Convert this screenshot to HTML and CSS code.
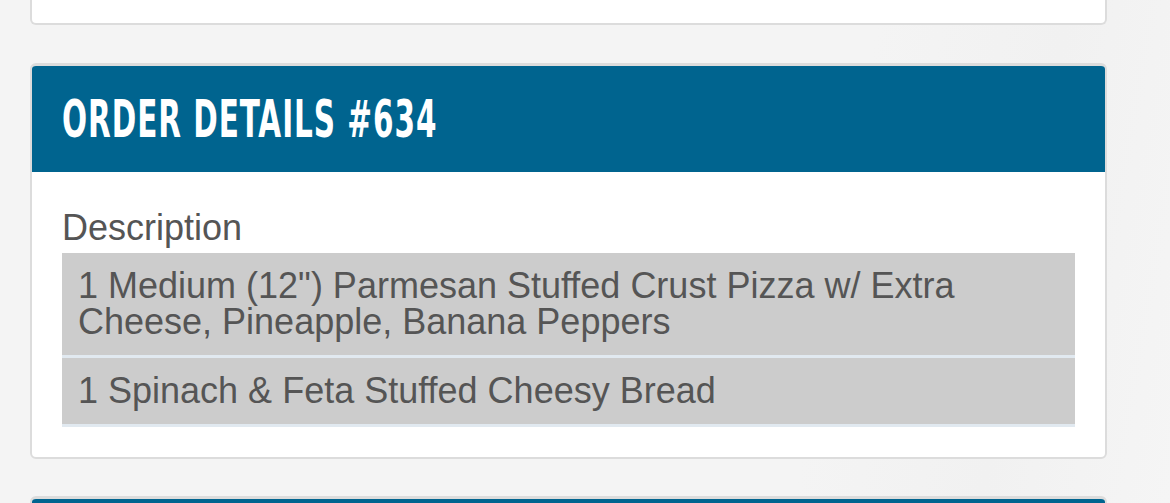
FILE: index.html
```html
<!DOCTYPE html>
<html>
<head>
<meta charset="utf-8">
<link rel="stylesheet" href="styles.css">
</head>
<body>
<div class="page">
  <div class="card card-prev"></div>
  <div class="card">
    <div class="card-header"><h2 class="title">ORDER DETAILS #634</h2></div>
    <div class="card-body">
      <div class="label">Description</div>
      <div class="items">
        <div class="item">1 Medium (12") Parmesan Stuffed Crust Pizza w/ Extra Cheese, Pineapple, Banana Peppers</div>
        <div class="item">1 Spinach &amp; Feta Stuffed Cheesy Bread</div>
      </div>
    </div>
  </div>
  <div class="card card-next">
    <div class="card-header card-header-stub"></div>
  </div>
</div>
</body>
</html>
```
FILE: styles.css
```css
html, body {
  margin: 0;
  padding: 0;
}
body {
  background: linear-gradient(100deg, #f4f4f4 0%, #f4f4f4 70%, #f1f1f1 85%, #f5f5f5 100%);
  font-family: "Liberation Sans", Arial, sans-serif;
  height: 503px;
  overflow: hidden;
}
.page {
  display: flex;
  flex-direction: column;
  gap: 37px;
  padding: 0 63px 0 30px;
}
.card {
  background: #fff;
  border: 2px solid #dcdcdc;
  border-top-width: 3px;
  border-radius: 6px;
  overflow: hidden;
}
.card-prev {
  border-top: none;
  border-radius: 0 0 6px 6px;
  height: 23px;
  margin-bottom: 1px;
}
.card-next {
  height: 20px;
}
.card-header {
  background: #00648f;
  height: 106px;
  display: flex;
  align-items: center;
  padding: 0 30px;
}
.title {
  margin: 0;
  color: #fff;
  font-family: "DejaVu Sans Condensed", "DejaVu Sans", sans-serif;
  font-weight: bold;
  font-size: 51px;
  line-height: 1;
  letter-spacing: 1.5px;
  transform: scaleX(0.643);
  transform-origin: left center;
  white-space: nowrap;
}
.card-body {
  padding: 38px 30px 30px;
}
.label {
  color: #555;
  font-size: 36px;
  line-height: 36px;
  margin-bottom: 7px;
}
.items {
  display: flex;
  flex-direction: column;
}
.item {
  background: #cccccc;
  color: #555;
  font-size: 36px;
  line-height: 36px;
  padding: 15px 16px;
  border-bottom: 3px solid #e1e9f0;
}
```
